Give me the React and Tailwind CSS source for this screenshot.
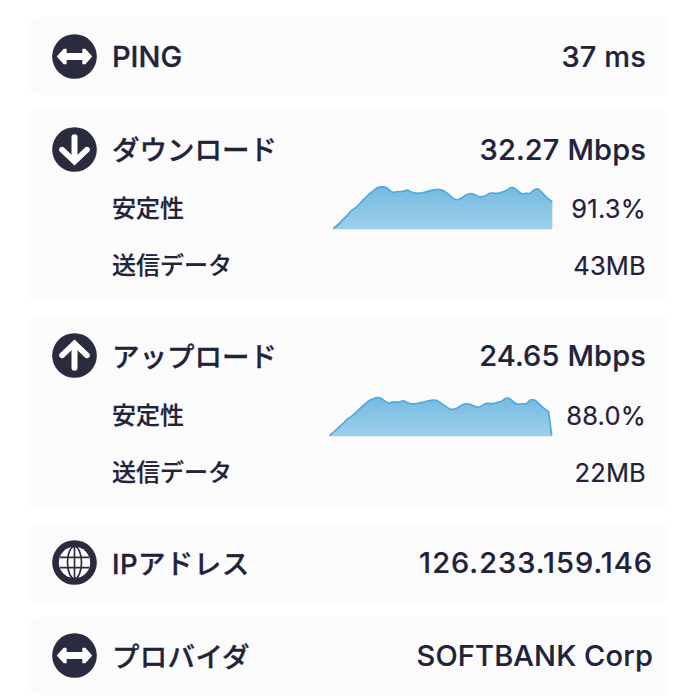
import React from 'react';

const downloadPoints = [
  [40, 176], [56, 163], [70, 147], [84, 134], [95, 120], [107, 114], [120, 100], [140, 79], [158, 63], [172, 53],
  [184, 50], [197, 51], [208, 60], [219, 69], [229, 64], [243, 65], [256, 63], [263, 59], [273, 66], [288, 70],
  [302, 69], [318, 66], [335, 61], [350, 58], [366, 59], [378, 67], [390, 76], [400, 86], [411, 90], [424, 86],
  [438, 74], [451, 70], [463, 73], [474, 80], [486, 81], [498, 77], [509, 69], [521, 69], [533, 71], [543, 67],
  [556, 64], [567, 56], [576, 51], [586, 55], [597, 67], [608, 72], [620, 70], [632, 71], [641, 58], [655, 56],
  [666, 67], [680, 83], [697, 96],
];

const uploadPoints = [
  [28, 167], [42, 156], [57, 141], [72, 128], [82, 116], [94, 111], [108, 97], [128, 78], [148, 61], [162, 55],
  [172, 52], [184, 55], [196, 64], [206, 71], [216, 65], [230, 67], [243, 65], [250, 61], [261, 68], [275, 72],
  [289, 71], [304, 68], [320, 64], [336, 60], [351, 61], [364, 70], [376, 78], [386, 86], [397, 89], [410, 86],
  [426, 74], [439, 71], [451, 73], [462, 79], [474, 82], [486, 78], [497, 70], [508, 70], [519, 72], [530, 68],
  [543, 65], [554, 57], [563, 53], [573, 58], [584, 70], [596, 73], [608, 71], [620, 72], [629, 60], [642, 58],
  [654, 68], [668, 83], [686, 95], [695, 167],
];

// Curve through the midpoints so the line stays soft
const toPath = (points) => {
  let d = `M${points[0][0]} ${points[0][1]}`;
  for (let i = 1; i < points.length - 2; i++) {
    const [x, y] = points[i];
    const [nx, ny] = points[i + 1];
    d += ` Q${x} ${y} ${(x + nx) / 2} ${(y + ny) / 2}`;
  }
  points.slice(-2).forEach(([x, y]) => {
    d += ` L${x} ${y}`;
  });
  return d;
};

const StabilityChart = ({ id, points, base, className = '' }) => {
  const line = toPath(points);
  const first = points[0][0];
  const last = points[points.length - 1][0];
  return (
    <svg viewBox="24 0 678 210" className={`w-[226px] h-[70px] flex-shrink-0 ${className}`}>
      <defs>
        <linearGradient id={id} gradientUnits="userSpaceOnUse" x1="0" y1="50" x2="0" y2={base}>
          <stop offset="0" stopColor="#74bae1" />
          <stop offset="1" stopColor="#9dd0ea" />
        </linearGradient>
      </defs>
      <path d={`${line} L${last} ${base} L${first} ${base} Z`} fill={`url(#${id})`} />
      <path d={line} fill="none" stroke="#51a9dc" strokeWidth="5" strokeLinejoin="round" />
    </svg>
  );
};

const Badge = ({ children }) => (
  <svg viewBox="0 0 135 135" className="w-[45px] h-[45px] flex-shrink-0">
    <circle cx="67.5" cy="67.5" r="67" fill="#2b2b3f" />
    {children}
  </svg>
);

const SwapIcon = () => (
  <Badge>
    <path
      d="M17 67.5 L36 46 H42 V59 H93 V46 H99 L118 67.5 L99 89 H93 V76 H42 V89 H36 Z"
      fill="#fff"
      stroke="#fff"
      strokeWidth="4"
      strokeLinejoin="round"
    />
  </Badge>
);

const DownIcon = () => (
  <Badge>
    <path d="M67.5 31 V98" stroke="#fff" strokeWidth="18" strokeLinecap="round" />
    <path d="M30 68 L67.5 104 L105 68" fill="none" stroke="#fff" strokeWidth="17" strokeLinecap="round" />
  </Badge>
);

const UpIcon = () => (
  <Badge>
    <path d="M67.5 104 V37" stroke="#fff" strokeWidth="18" strokeLinecap="round" />
    <path d="M30 67 L67.5 31 L105 67" fill="none" stroke="#fff" strokeWidth="17" strokeLinecap="round" />
  </Badge>
);

const GlobeIcon = () => (
  <Badge>
    <circle cx="67.5" cy="67.5" r="47" fill="#fff" />
    <g fill="none" stroke="#2b2b3f" strokeWidth="5">
      <path d="M67.5 20 V115 M24 52 H111 M24 83 H111" />
      <ellipse cx="67.5" cy="67.5" rx="21" ry="48" />
    </g>
  </Badge>
);

const Card = ({ className = '', children }) => (
  <div className={`bg-[#fbfbfb] rounded-lg ${className}`}>{children}</div>
);

const Heading = ({ icon, label, value, className = 'pr-[23px]', labelClass = 'text-[27.5px] pt-0.5' }) => (
  <div className={`flex items-center h-[45px] pl-[23px] text-[29px] font-medium leading-none ${className}`}>
    {icon}
    <span className={`ml-[15px] [-webkit-text-stroke:0.3px] ${labelClass}`}>{label}</span>
    <span className="ml-auto tracking-[0.15px] [-webkit-text-stroke:0.2px]">{value}</span>
  </div>
);

const Detail = ({ label, value, children }) => (
  <div className="flex items-center h-[57px] pl-[83px] pr-[23px] text-2xl leading-none">
    <span className="font-medium [-webkit-text-stroke:0.2px]">{label}</span>
    <div className="ml-auto flex items-center">
      {children}
      <span className="w-[92px] text-right text-[25.5px] tracking-[0.2px] [-webkit-text-stroke:0.2px]">{value}</span>
    </div>
  </div>
);

const App = () => {
  return (
    <div className="h-[700px] overflow-hidden bg-white pt-[17px] pl-[29px] pr-[29px] whitespace-nowrap text-[#22223a] font-[Inter,'Noto_Sans_CJK_JP',sans-serif]">
      <div className="flex flex-col gap-[15px]">
        <Card className="h-[78px] pt-[17px]">
          <Heading icon={<SwapIcon />} label="PING" value="37 ms" labelClass="text-[29px]" />
        </Card>

        <Card className="h-[191px] pt-[17px]">
          <Heading icon={<DownIcon />} label="ダウンロード" value="32.27 Mbps" />
          <div className="pt-2">
            <Detail label="安定性" value="91.3%">
              <StabilityChart id="download" points={downloadPoints} base={178} className="-mt-2" />
            </Detail>
            <Detail label="送信データ" value="43MB" />
          </div>
        </Card>

        <Card className="mt-px h-[192px] pt-4">
          <Heading
            icon={<UpIcon />}
            label="アップロード"
            value="24.65 Mbps"
            labelClass="text-[27.5px] pt-1"
          />
          <div className="pt-[9px]">
            <Detail label="安定性" value="88.0%">
              <StabilityChart id="upload" points={uploadPoints} base={169} className="-mt-0.5" />
            </Detail>
            <Detail label="送信データ" value="22MB" />
          </div>
        </Card>

        <Card className="h-[78px] pt-4">
          <Heading
            icon={<GlobeIcon />}
            label="IPアドレス"
            value={<span className="tracking-[1px]">126.233.159.146</span>}
            className="pr-4"
            labelClass="text-[27.5px] pt-1 tracking-[0.4px]"
          />
        </Card>

        <Card className="h-[78px] pt-4">
          <Heading
            icon={<SwapIcon />}
            label="プロバイダ"
            value="SOFTBANK Corp"
            className="pr-4"
            labelClass="text-[27.5px] pt-1 tracking-[0.3px]"
          />
        </Card>
      </div>
    </div>
  );
};

export default App;
